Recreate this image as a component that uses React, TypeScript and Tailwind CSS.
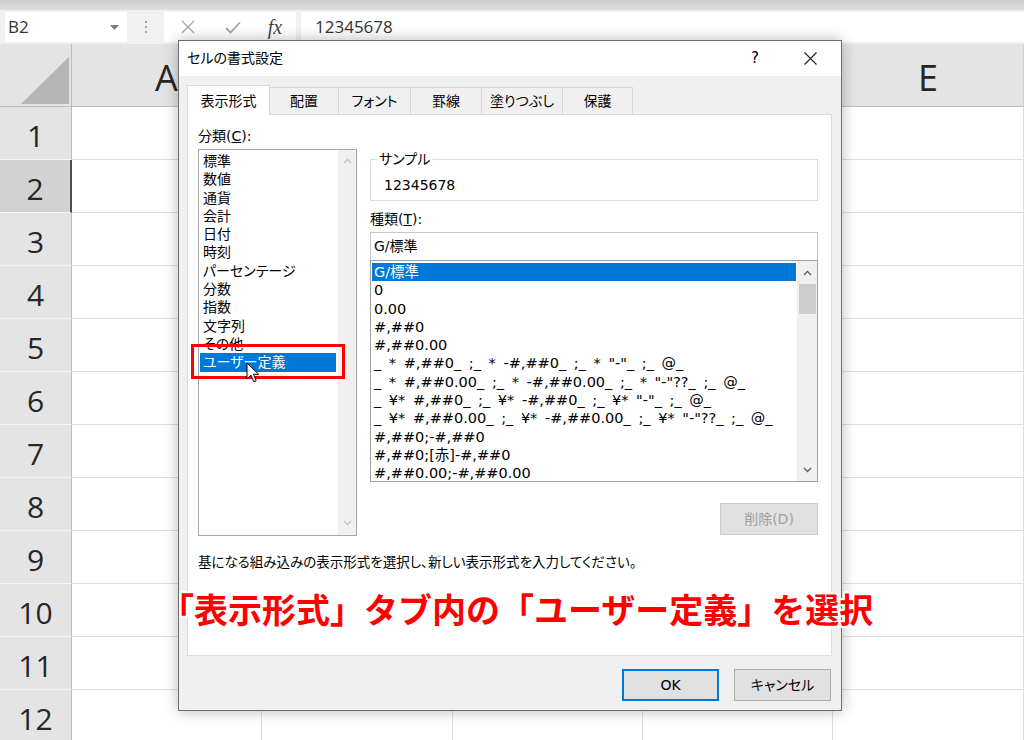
import React from "react";

const JP = "font-['Noto_Sans_CJK_JP',sans-serif]";
const UI = "font-['DejaVu_Sans','Noto_Sans_CJK_JP',sans-serif] [font-feature-settings:'palt']";

function Chevron({ up, color }: { up?: boolean; color: string }) {
  return (
    <svg width="9" height="6" viewBox="0 0 9 6">
      <path
        d={up ? "M1 5 L4.5 1.5 L8 5" : "M1 1 L4.5 4.5 L8 1"}
        fill="none"
        stroke={color}
        strokeWidth="1.4"
      />
    </svg>
  );
}

const cols = [
  { l: "A", w: "w-[190px]" },
  { l: "B", w: "w-[191px]" },
  { l: "C", w: "w-[190px]" },
  { l: "D", w: "w-[190px]" },
  { l: "E", w: "w-[191px]" },
];

const categories = [
  "標準",
  "数値",
  "通貨",
  "会計",
  "日付",
  "時刻",
  "パーセンテージ",
  "分数",
  "指数",
  "文字列",
  "その他",
  "ユーザー定義",
];

const formats = [
  "G/標準",
  "0",
  "0.00",
  "#,##0",
  "#,##0.00",
  '_ * #,##0_ ;_ * -#,##0_ ;_ * "-"_ ;_ @_',
  '_ * #,##0.00_ ;_ * -#,##0.00_ ;_ * "-"??_ ;_ @_',
  '_ ¥* #,##0_ ;_ ¥* -#,##0_ ;_ ¥* "-"_ ;_ @_',
  '_ ¥* #,##0.00_ ;_ ¥* -#,##0.00_ ;_ ¥* "-"??_ ;_ @_',
  "#,##0;-#,##0",
  "#,##0;[赤]-#,##0",
  "#,##0.00;-#,##0.00",
];

const tabs = [
  { t: "表示形式", w: "w-[83px]", active: true },
  { t: "配置", w: "w-[69px]" },
  { t: "フォント", w: "w-[72px]" },
  { t: "罫線", w: "w-[71px]" },
  { t: "塗りつぶし", w: "w-[81px]" },
  { t: "保護", w: "w-[70px]" },
];

export default function App() {
  return (
    <div className="relative w-[1024px] h-[740px] overflow-hidden bg-white">
      {/* Formula bar */}
      <div className="h-[44px] bg-[#f1f1f1] flex flex-col">
        <div className="h-[10px] bg-gradient-to-b from-[#cdcdcd] to-[#dddddd]" />
        <div className="flex h-[30px] mt-[2px]">
          <div className="ml-[5px] w-[122px] bg-white flex items-center pl-[3px] pr-[8px]">
            <span className="font-['Open_Sans',sans-serif] text-[17px] text-[#333]">B2</span>
            <svg className="ml-auto" width="9" height="5" viewBox="0 0 9 5">
              <path d="M0 0 L9 0 L4.5 5 Z" fill="#7a7a7a" />
            </svg>
          </div>
          <div className="w-[37px] flex flex-col items-center justify-center gap-[3px]">
            <div className="w-[2px] h-[2px] bg-[#a8a8a8]" />
            <div className="w-[2px] h-[2px] bg-[#a8a8a8]" />
            <div className="w-[2px] h-[2px] bg-[#a8a8a8]" />
          </div>
          <div className="w-[132px] bg-white flex items-center">
            <div className="w-[48px] flex justify-center">
              <svg width="14" height="14" viewBox="0 0 14 14">
                <path d="M1 1 L13 13 M13 1 L1 13" stroke="#a6a6a6" strokeWidth="1.3" />
              </svg>
            </div>
            <div className="w-[42px] flex justify-center">
              <svg width="16" height="13" viewBox="0 0 16 13">
                <path d="M1 7 L5.5 11.5 L15 1.5" fill="none" stroke="#a6a6a6" strokeWidth="1.8" />
              </svg>
            </div>
            <div className="w-[42px] flex justify-center">
              <span className="font-['Liberation_Serif',serif] italic text-[20px] text-[#444] leading-none">
                fx
              </span>
            </div>
          </div>
          <div className="ml-[5px] flex-1 bg-white flex items-center pl-[14px]">
            <span className="font-['Open_Sans',sans-serif] text-[17px] text-[#333]">12345678</span>
          </div>
        </div>
      </div>

      {/* Column headers */}
      <div className="flex h-[63px]">
        <div className="w-[72px] shrink-0 bg-[#e4e4e4] border-r border-b border-[#bdbdbd] flex items-end justify-end pr-[2px] pb-[2px]">
          <svg width="48" height="47" viewBox="0 0 48 47">
            <path d="M48 0 L48 47 L0 47 Z" fill="#b5b5b5" />
          </svg>
        </div>
        {cols.map((c) => (
          <div
            key={c.l}
            className={`${c.w} shrink-0 bg-[#e4e4e4] border-r border-b border-r-[#d0d0d0] border-b-[#bdbdbd] flex justify-center pt-[14px] font-['Open_Sans',sans-serif] text-[36px] leading-[40px] text-[#262626]`}
          >
            {c.l}
          </div>
        ))}
      </div>

      {/* Rows */}
      {Array.from({ length: 12 }, (_, i) => (
        <div key={i} className="flex h-[53px]">
          <div
            className={`w-[72px] shrink-0 flex items-center justify-center pt-[4px] border-b border-b-[#f2f2f2] font-['Open_Sans',sans-serif] text-[30px] text-[#262626] ${
              i === 1
                ? "bg-[#d2d2d2] border-r-2 border-r-[#44504f]"
                : "bg-[#e4e4e4] border-r border-r-[#bdbdbd]"
            }`}
          >
            {i + 1}
          </div>
          {cols.map((c) => (
            <div key={c.l} className={`${c.w} shrink-0 border-r border-b border-[#dedede]`} />
          ))}
        </div>
      ))}

      {/* Dialog */}
      <div
        className={`absolute left-[178px] top-[40px] w-[664px] h-[671px] border border-[#6f6f6f] bg-[#f0f0f0] shadow-[0_0_14px_rgba(0,0,0,0.28)] flex flex-col text-black ${UI}`}
      >
        <div className="h-[35px] bg-white flex items-center shrink-0">
          <span className="ml-[8px] text-[14px]">セルの書式設定</span>
          <span className="ml-auto w-[20px] text-center text-[15px]">?</span>
          <div className="ml-[35px] mr-[21px] w-[20px] flex justify-center">
            <svg width="13" height="13" viewBox="0 0 13 13">
              <path d="M0.5 0.5 L12.5 12.5 M12.5 0.5 L0.5 12.5" stroke="#222" strokeWidth="1.1" />
            </svg>
          </div>
        </div>

        <div className="flex flex-col px-[8px] pt-[10px]">
          <div className="flex items-end h-[28px] relative z-10">
            {tabs.map((t) =>
              t.active ? (
                <div
                  key={t.t}
                  className={`${t.w} h-[30px] mb-[-1px] bg-white border-t border-l border-r border-[#d9d9d9] flex items-center justify-center text-[14px] leading-[18px]`}
                >
                  {t.t}
                </div>
              ) : (
                <div
                  key={t.t}
                  className={`${t.w} h-[27px] bg-[#f0f0f0] border-t border-r border-[#d9d9d9] flex items-center justify-center text-[14px] leading-[18px]`}
                >
                  {t.t}
                </div>
              )
            )}
          </div>

          <div className="w-[645px] h-[542px] bg-white border border-[#dcdcdc] flex flex-col pl-[10px]">
            <div className="flex">
              {/* Left column */}
              <div className="w-[159px] flex flex-col pt-[11px]">
                <div className="text-[14px] leading-[20px]">
                  分類(<span className="underline">C</span>):
                </div>
                <div className="mt-[3px] h-[387px] border border-[#a8a8a8] flex">
                  <div className="ml-[1px] w-[136px] pt-[2px] flex flex-col">
                    {categories.map((c) => (
                      <div
                        key={c}
                        className={`h-[18.3px] leading-[18.3px] pl-[3px] text-[14px] whitespace-nowrap ${
                          c === "ユーザー定義" ? "bg-[#0078d7] text-white" : ""
                        }`}
                      >
                        {c}
                      </div>
                    ))}
                  </div>
                  <div className="ml-[2px] w-[18px] bg-[#f0f0f0] flex flex-col items-center justify-between pt-[8px] pb-[9px]">
                    <Chevron up color="#c4c4c4" />
                    <Chevron color="#c4c4c4" />
                  </div>
                </div>
              </div>

              {/* Right column */}
              <div className="ml-[13px] w-[448px] flex flex-col pt-[35px]">
                <fieldset className="h-[51px] border border-[#dcdcdc]">
                  <legend className="ml-[6px] px-[2px] text-[14px] leading-[18px]">サンプル</legend>
                  <div className="pl-[13px] pt-[5px] text-[14px] leading-[24px]">12345678</div>
                </fieldset>
                <div className="mt-[8px] text-[14px] leading-[20px]">
                  種類(<span className="underline">T</span>):
                </div>
                <div className="mt-[3px] h-[28px] border border-b-0 border-[#c8c8c8] flex items-center pl-[3px] text-[14px]">
                  G/標準
                </div>
                <div className="h-[222px] border border-[#a0a0a0] flex">
                  <div className="ml-[1px] w-[424px] pt-[2px] flex flex-col">
                    {formats.map((f, idx) => (
                      <div
                        key={f}
                        className={`h-[18.3px] leading-[18.3px] pl-[2px] text-[14.5px] [word-spacing:3px] whitespace-pre ${
                          idx === 0 ? "bg-[#0078d7] text-white" : ""
                        }`}
                      >
                        {f}
                      </div>
                    ))}
                  </div>
                  <div className="ml-[1px] w-[20px] bg-[#f0f0f0] flex flex-col items-center">
                    <div className="h-[23px] flex items-center justify-center">
                      <Chevron up color="#606060" />
                    </div>
                    <div className="w-[17px] h-[30px] bg-[#cdcdcd]" />
                    <div className="flex-1" />
                    <div className="h-[23px] flex items-center justify-center">
                      <Chevron color="#606060" />
                    </div>
                  </div>
                </div>
                <div className="mt-[21px] self-end w-[98px] h-[32px] bg-[#e1e1e1] border border-[#cccccc] flex items-center justify-center text-[14px] text-[#a0a0a0]">
                  削除(D)
                </div>
              </div>
            </div>

            <div className="mt-[17px] text-[13.5px] leading-[18px]">
              基になる組み込みの表示形式を選択し、新しい表示形式を入力してください。
            </div>
          </div>

          <div className="mt-[13px] flex justify-end gap-[15px] pr-[2px]">
            <div className="w-[97px] h-[32px] bg-[#e1e1e1] border-2 border-[#0078d7] flex items-center justify-center text-[14px]">
              OK
            </div>
            <div className="w-[97px] h-[32px] bg-[#e1e1e1] border border-[#adadad] flex items-center justify-center text-[14px]">
              キャンセル
            </div>
          </div>
        </div>
      </div>

      {/* Red highlight box */}
      <div className="absolute left-[191px] top-[344px] w-[154px] h-[35px] border-[3px] border-[#ff0000]" />

      {/* Mouse cursor */}
      <svg className="absolute left-[246px] top-[362px]" width="14" height="22" viewBox="0 0 14 22">
        <path
          d="M1 1 L1 17 L5 13.2 L7.8 19.8 L10.2 18.8 L7.5 12.3 L12.6 12.3 Z"
          fill="#fff"
          stroke="#000"
          strokeWidth="1"
          strokeLinejoin="round"
        />
      </svg>

      {/* Annotation */}
      <div
        className={`absolute left-[160px] top-[588px] whitespace-nowrap text-[34px] leading-[42px] font-bold text-[#ff0000] ${JP} [text-shadow:2px_0_0_#fff,-2px_0_0_#fff,0_2px_0_#fff,0_-2px_0_#fff,2px_2px_0_#fff,-2px_-2px_0_#fff,2px_-2px_0_#fff,-2px_2px_0_#fff]`}
      >
        「表示形式」タブ内の「ユーザー定義」を選択
      </div>
    </div>
  );
}
